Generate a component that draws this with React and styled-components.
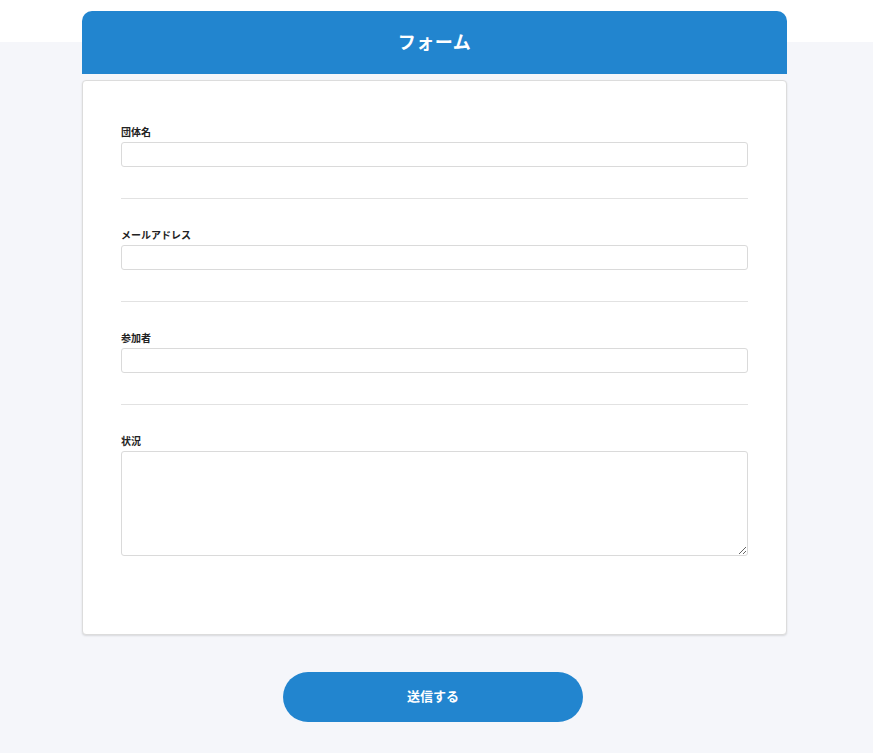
import React from "react";
import styled, { createGlobalStyle } from "styled-components";

const Global = createGlobalStyle`
  html, body { margin: 0; padding: 0; }
  body {
    background: linear-gradient(#ffffff 0, #ffffff 42px, #f5f6fa 42px, #f5f6fa 100%);
    min-height: 753px;
    font-family: "Noto Sans CJK JP", "Noto Sans", sans-serif;
    color: #222;
  }
`;

const Page = styled.div`
  padding: 11px 86px 31px 82px;
  display: flex;
  flex-direction: column;
`;

const Header = styled.div`
  box-sizing: border-box;
  height: 63px;
  padding-bottom: 3px;
  background: #2285cf;
  border-radius: 10px 10px 0 0;
  display: flex;
  align-items: center;
  justify-content: center;
`;

const Title = styled.h1`
  margin: 0;
  color: #fff;
  font-size: 18px;
  font-weight: 700;
  letter-spacing: 0.5px;
`;

const Card = styled.form`
  margin-top: 6px;
  background: #fff;
  border: 1px solid #dcdcdc;
  border-radius: 4px;
  box-shadow: 0 1px 2px rgba(0, 0, 0, 0.12);
  padding: 15px 38px 47px;
  display: flex;
  flex-direction: column;
`;

const Field = styled.div`
  padding: 31px 0;
  border-bottom: 1px solid #e2e2e2;
  display: flex;
  flex-direction: column;
  gap: 3px;
  &:last-child {
    border-bottom: none;
  }
`;

const Label = styled.label`
  font-size: 10px;
  line-height: 12px;
  font-weight: 700;
  color: #222;
  margin-top: -1px;
  margin-bottom: 1px;
`;

const Input = styled.input`
  box-sizing: border-box;
  width: 100%;
  height: 25px;
  border: 1px solid #dadada;
  border-radius: 3px;
  background: #fff;
  margin: 0;
  outline: none;
`;

const TextArea = styled.textarea`
  box-sizing: border-box;
  width: 100%;
  height: 105px;
  border: 1px solid #dadada;
  border-radius: 3px;
  background: #fff;
  margin: 0;
  display: block;
  outline: none;
`;

const Actions = styled.div`
  display: flex;
  justify-content: center;
  padding-top: 37px;
  padding-right: 3px;
`;

const Submit = styled.button`
  box-sizing: border-box;
  width: 300px;
  height: 50px;
  padding: 0 0 3px;
  border: none;
  border-radius: 25px;
  background: #2285cf;
  color: #fff;
  font-family: "Noto Sans CJK JP", "Noto Sans", sans-serif;
  font-size: 13px;
  font-weight: 700;
  cursor: pointer;
`;

const fields = [
  { label: "団体名", type: "input" },
  { label: "メールアドレス", type: "input" },
  { label: "参加者", type: "input" },
  { label: "状況", type: "textarea" },
];

export default function App() {
  return (
    <>
      <Global />
      <Page>
        <Header>
          <Title>フォーム</Title>
        </Header>
        <Card onSubmit={(e) => e.preventDefault()}>
          {fields.map((f) => (
            <Field key={f.label}>
              <Label>{f.label}</Label>
              {f.type === "textarea" ? <TextArea /> : <Input type="text" />}
            </Field>
          ))}
        </Card>
        <Actions>
          <Submit type="button">送信する</Submit>
        </Actions>
      </Page>
    </>
  );
}
